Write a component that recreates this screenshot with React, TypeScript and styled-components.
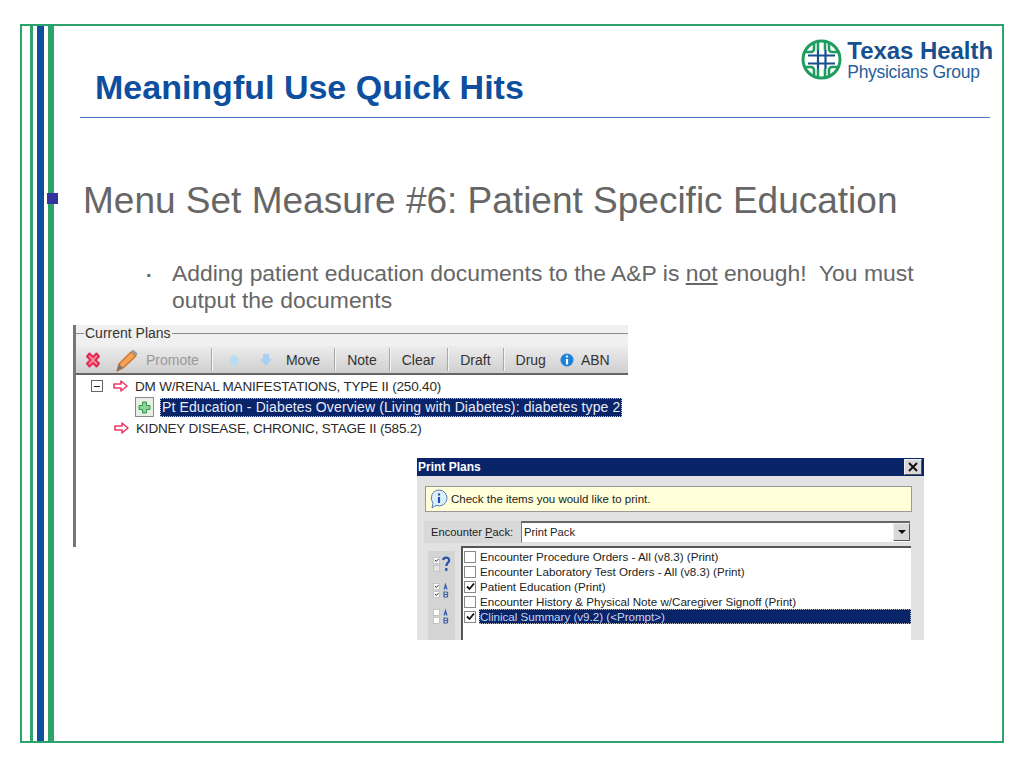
import React from 'react';
import styled, { createGlobalStyle } from 'styled-components';

const GREEN = '#2ba36b';
const BLUE = '#0d4f9e';
const NAVY = '#0a246a';
const GRAY_TEXT = '#666666';

const GlobalStyle = createGlobalStyle`
    html, body {
        margin: 0;
        padding: 0;
        background: white;
        font-family: "Liberation Sans", Arial, sans-serif;
    }
`;

const Page = styled.div`
    width: 1024px;
    height: 768px;
    padding: 24px 20px 25px;
    box-sizing: border-box;
    overflow: hidden;
`;

const Frame = styled.div`
    height: 100%;
    box-sizing: border-box;
    border: 2px solid ${GREEN};
    display: flex;
`;

const Stripes = styled.div`
    flex: none;
    width: 32px;
    padding-left: 8px;
    box-sizing: border-box;
    display: flex;
    gap: 4px;
`;

const Stripe = styled.div<{ $width: number; $color: string }>`
    width: ${p => p.$width}px;
    background: ${p => p.$color};
`;

const Main = styled.div`
    flex: 1;
    min-width: 0;
    position: relative;
`;

const Header = styled.div`
    height: 91px;
    margin: 0 12px 0 26px;
    padding-left: 15px;
    border-bottom: 1px solid #4a78c4;
    display: flex;
    justify-content: space-between;
`;

const Title = styled.h1`
    margin: 39px 0 0;
    font-size: 34px;
    line-height: 44px;
    font-weight: bold;
    color: ${BLUE};
    white-space: nowrap;
`;

const Logo = styled.div`
    margin: 13px -3px 0 0;
    display: flex;
    gap: 5px;
`;

const LogoText = styled.div`
    display: flex;
    flex-direction: column;
`;

const LogoName = styled.span`
    font-size: 24px;
    line-height: 24px;
    font-weight: bold;
    color: #17508f;
    letter-spacing: -0.05px;
`;

const LogoGroup = styled.span`
    font-size: 17.5px;
    line-height: 18px;
    color: #2a5f9a;
    letter-spacing: -0.3px;
`;

const Bullet = styled.div`
    position: absolute;
    left: -7px;
    top: 167px;
    width: 11px;
    height: 11px;
    background: #3333a0;
`;

const Heading = styled.h2`
    margin: 61px 0 0 29px;
    font-size: 37px;
    line-height: 44px;
    font-weight: normal;
    color: ${GRAY_TEXT};
    white-space: nowrap;
`;

const SubItem = styled.div`
    margin: 37px 0 0 118px;
    width: 770px;
    font-size: 22.9px;
    line-height: 27px;
    color: ${GRAY_TEXT};
    position: relative;
`;

const SubDot = styled.span`
    position: absolute;
    left: -26px;
    top: 2px;
    font-size: 20px;
    font-weight: bold;
`;

const Screens = styled.div`
    margin: 11px 0 0 19px;
    position: relative;
    width: 860px;
    height: 316px;
`;

const Panel = styled.div`
    width: 555px;
    height: 222px;
    box-sizing: border-box;
    border-left: 3px solid #777;
    color: #2a2a2a;
    font-size: 13.5px;
`;

const GroupLabelRow = styled.div`
    height: 21px;
    background: #f0f0f0;
    display: flex;
    align-items: flex-start;
    gap: 1px;
    line-height: 16px;
    font-size: 14px;
    color: #333;
`;

const GroupRule = styled.div<{ $width?: number }>`
    flex: ${p => (p.$width ? 'none' : 1)};
    width: ${p => p.$width ?? 0}px;
    height: 1px;
    margin-top: 8px;
    background: #8c8c8c;
`;

const Toolbar = styled.div`
    height: 29px;
    box-sizing: border-box;
    border-bottom: 2px solid #666;
    background: linear-gradient(#ececec, #cfcfcf);
    padding-left: 7px;
    display: flex;
    align-items: center;
    gap: 12px;
`;

const ToolText = styled.span<{ $disabled?: boolean; $after?: number }>`
    color: ${p => (p.$disabled ? '#999' : '#333')};
    font-size: 14px;
    white-space: nowrap;
    margin-right: ${p => p.$after ?? 0}px;
`;

const ToolSep = styled.span`
    width: 1px;
    height: 23px;
    background: #a8a8a8;
    box-shadow: 1px 0 0 #f4f4f4;
`;

const ToolIcon = styled.svg<{ $before?: number; $after?: number }>`
    flex: none;
    margin-left: ${p => p.$before ?? 0}px;
    margin-right: ${p => p.$after ?? 0}px;
`;

const Tree = styled.div`
    background: white;
    padding-top: 1px;
`;

const TreeRow = styled.div<{ $indent: number; $height: number }>`
    height: ${p => p.$height}px;
    padding-left: ${p => p.$indent}px;
    display: flex;
    align-items: center;
    white-space: nowrap;
`;

const Expander = styled.span`
    width: 10px;
    height: 10px;
    border: 1px solid #666;
    margin-right: 10px;
    display: flex;
    align-items: center;
    justify-content: center;
    &::after {
        content: '';
        width: 6px;
        height: 1px;
        background: #222;
    }
`;

const RowLabel = styled.span`
    margin-left: 7px;
    letter-spacing: -0.18px;
`;

const PlusBox = styled.span`
    width: 17px;
    height: 18px;
    border: 1px solid #8a8a8a;
    background: #e8efe4;
    display: flex;
    align-items: center;
    justify-content: center;
    margin-right: 6px;
`;

const SelectedLabel = styled.span`
    width: 462px;
    height: 19px;
    box-sizing: border-box;
    border: 1px dotted #c8c8c8;
    background: ${NAVY};
    color: #e8ecf8;
    font-size: 14px;
    line-height: 17px;
    padding-left: 1px;
    letter-spacing: 0.12px;
`;

const Dialog = styled.div`
    position: absolute;
    left: 344px;
    top: 133px;
    width: 507px;
    height: 182px;
    background: #e2e2e2;
    overflow: hidden;
    font-size: 11.6px;
    color: #222;
`;

const DialogTitle = styled.div`
    height: 18px;
    background: ${NAVY};
    color: white;
    font-weight: bold;
    font-size: 12px;
    padding: 0 2px 0 1px;
    display: flex;
    align-items: center;
    justify-content: space-between;
`;

const CloseButton = styled.span`
    width: 16px;
    height: 14px;
    background: #d8d8d8;
    border: 1px solid #f0f0f0;
    border-right-color: #555;
    border-bottom-color: #555;
    display: flex;
    align-items: center;
    justify-content: center;
`;

const Notice = styled.div`
    margin: 10px 12px 0 8px;
    height: 26px;
    box-sizing: border-box;
    border: 1px solid #999;
    background: #ffffd9;
    display: flex;
    align-items: center;
    gap: 2px;
    padding-left: 3px;
    font-size: 11.5px;
`;

const PackRow = styled.div`
    margin: 9px 14px 0 7px;
    height: 22px;
    background: #d9d9d9;
    font-size: 11.2px;
    display: flex;
    align-items: stretch;
`;

const PackLabel = styled.label`
    width: 97px;
    padding-left: 7px;
    box-sizing: border-box;
    display: flex;
    align-items: center;
    white-space: pre;
`;

const Underlined = styled.span`
    text-decoration: underline;
`;

const PackSelect = styled.div`
    flex: 1;
    background: white;
    border-top: 2px solid #666;
    border-left: 1px solid #777;
    border-bottom: 1px solid #ddd;
    display: flex;
    align-items: center;
    justify-content: space-between;
    padding: 0 0 1px 2px;
`;

const DropButton = styled.span`
    width: 15px;
    height: 16px;
    background: #d8d8d8;
    border: 1px solid #f0f0f0;
    border-right-color: #555;
    border-bottom-color: #555;
    display: flex;
    align-items: center;
    justify-content: center;
    &::after {
        content: '';
        border: 4px solid transparent;
        border-top-color: #111;
        border-bottom: 0;
    }
`;

const ListArea = styled.div`
    margin: 3px 13px 0 11px;
    height: 100px;
    display: flex;
    gap: 6px;
`;

const FilterStrip = styled.div`
    width: 27px;
    background: #d4d4d4;
    padding-top: 5px;
    box-sizing: border-box;
    display: flex;
    flex-direction: column;
    gap: 8px;
    align-items: center;
    margin-top: 5px;
`;

const PlanList = styled.div`
    flex: 1;
    background: white;
    border-left: 2px solid #555;
    border-top: 2px solid #555;
    padding-top: 1px;
`;

const PlanRow = styled.div`
    height: 15px;
    display: flex;
    align-items: center;
    padding-left: 1px;
    gap: 3px;
    white-space: nowrap;
`;

const CheckBox = styled.span`
    flex: none;
    width: 10px;
    height: 10px;
    border: 1px solid #888;
    background: white;
    display: flex;
    align-items: center;
    justify-content: center;
`;

const PlanLabel = styled.span<{ $selected?: boolean }>`
    flex: ${p => (p.$selected ? 1 : 'none')};
    height: 15px;
    line-height: 15px;
    padding-left: 1px;
    background: ${p => (p.$selected ? NAVY : 'transparent')};
    color: ${p => (p.$selected ? '#c8d4ee' : '#222')};
    outline: ${p => (p.$selected ? '1px dotted #bbb' : 'none')};
    outline-offset: -1px;
`;

const Arrow = () => (
    <svg width="15" height="12" viewBox="0 0 15 12">
        <path d="M1 4h7V1l6 5-6 5V8H1z" fill="white" stroke="#ee3a68" strokeWidth="1.600" strokeLinejoin="round" />
    </svg>
);

const LogoMark = () => (
    <svg width="41" height="41" viewBox="0 0 41 41" fill="none">
        <circle cx="20.500" cy="20.500" r="18.500" stroke="#1f9c60" strokeWidth="3" />
        <g stroke="#1f9c60" strokeWidth="2.600">
            <path d="M13 3v7a3 3 0 0 1-3 3H3" />
            <path d="M28 3v7a3 3 0 0 0 3 3h7" />
            <path d="M13 38v-7a3 3 0 0 0-3-3H3" />
            <path d="M28 38v-7a3 3 0 0 1 3-3h7" />
            <path d="M17 3v8M24 3v8M17 30v8M24 30v8" />
        </g>
        <g stroke="#17508f" strokeWidth="2.200">
            <path d="M7 16.500h27M7 24.500h27" />
            <path d="M17 11v19M24.500 11v19" />
        </g>
    </svg>
);

const PlanRows: { label: string; checked?: boolean; selected?: boolean }[] = [
    { label: 'Encounter Procedure Orders - All (v8.3) (Print)' },
    { label: 'Encounter Laboratory Test Orders - All (v8.3) (Print)' },
    { label: 'Patient Education (Print)', checked: true },
    { label: 'Encounter History & Physical Note w/Caregiver Signoff (Print)' },
    { label: 'Clinical Summary (v9.2) (<Prompt>)', checked: true, selected: true },
];

const FilterIcon = ({ glyph }: { glyph: 'q' | 'on' | 'off' }) => (
    <svg width="20" height="18" viewBox="0 0 20 18">
        <rect x="1.500" y="1.500" width="6" height="6" fill="white" stroke="#c4c4c4" />
        <rect x="1.500" y="9.500" width="6" height="6" fill={glyph === 'q' ? '#e4e4e4' : 'white'} stroke="#c4c4c4" />
        {glyph !== 'off' && <path d="M3 4l1.200 1.500L6.500 3" stroke="#333" fill="none" />}
        {glyph === 'on' && <path d="M3 12l1.200 1.500L6.500 11" stroke="#333" fill="none" />}
        {glyph === 'q'
            ? <path d="M11 4c1-3.500 7-3 6 1-.5 2-2.500 2-2.700 5M14.300 12v3" stroke="#2a50a8" strokeWidth="2.200" fill="none" />
            : <path d="M12 7.500l1.500-5 1.500 5M12.500 6h2M12 10h2.500a1.200 1.200 0 0 1 0 2.500H12zM12 12.500h2.500a1.200 1.200 0 0 1 0 2.500H12z" stroke="#3a60b0" strokeWidth="1.200" fill="none" />}
    </svg>
);

const App: React.FunctionComponent = () => (
    <Page>
        <GlobalStyle />
        <Frame>
            <Stripes>
                <Stripe $width={3} $color={GREEN} />
                <Stripe $width={7} $color={BLUE} />
                <Stripe $width={6} $color={GREEN} />
            </Stripes>
            <Main>
                <Bullet />
                <Header>
                    <Title>Meaningful Use Quick Hits</Title>
                    <Logo>
                        <LogoMark />
                        <LogoText>
                            <LogoName>Texas Health</LogoName>
                            <LogoGroup>Physicians Group</LogoGroup>
                        </LogoText>
                    </Logo>
                </Header>
                <Heading>Menu Set Measure #6: Patient Specific Education</Heading>
                <SubItem>
                    <SubDot>·</SubDot>
                    Adding patient education documents to the A&amp;P is <u>not</u> enough!&nbsp; You must output the documents
                </SubItem>
                <Screens>
                    <Panel>
                        <GroupLabelRow>
                            <GroupRule $width={8} />
                            Current Plans
                            <GroupRule />
                        </GroupLabelRow>
                        <Toolbar>
                            <ToolIcon width="20" height="20" viewBox="0 0 20 20">
                                <path d="M4 6.500l2.500-3L10 7l3.500-3.500 2.500 3-3.500 3.500 3.500 3.500-2.500 3L10 13l-3.500 3.500-2.500-3L7.500 10z" fill="#f78a9c" stroke="#e02c54" strokeWidth="2" strokeLinejoin="round" />
                            </ToolIcon>
                            <ToolIcon width="24" height="24" viewBox="0 0 24 24" $after={-5}>
                                <path d="M2 23l2-7L16 4l5 4L8 20z" fill="#f2a458" stroke="#cf6c22" strokeWidth="1.200" strokeLinejoin="round" />
                                <path d="M16 4l2-2.500 4.500 4L21 8z" fill="#9a9a9a" />
                                <path d="M2 23l2-7 4 4z" fill="#777" />
                            </ToolIcon>
                            <ToolText $disabled>Promote</ToolText>
                            <ToolSep />
                            <ToolIcon width="16" height="16" viewBox="0 0 16 16" $before={2} $after={4}>
                                <path d="M8 2l6 7h-3v5H5V9H2z" fill="#b8dcf4" />
                            </ToolIcon>
                            <ToolIcon width="16" height="16" viewBox="0 0 16 16">
                                <path d="M8 14l6-7h-3V2H5v5H2z" fill="#a8d0f4" />
                            </ToolIcon>
                            <ToolText $after={2}>Move</ToolText>
                            <ToolSep />
                            <ToolText>Note</ToolText>
                            <ToolSep />
                            <ToolText>Clear</ToolText>
                            <ToolSep />
                            <ToolText>Draft</ToolText>
                            <ToolSep />
                            <ToolText>Drug</ToolText>
                            <ToolIcon width="14" height="14" viewBox="0 0 14 14" $before={2} $after={-5}>
                                <circle cx="7" cy="7" r="6.500" fill="#1b82d8" />
                                <path d="M7 2.500v2M7 6v5.500" stroke="white" strokeWidth="2.200" />
                            </ToolIcon>
                            <ToolText>ABN</ToolText>
                        </Toolbar>
                        <Tree>
                            <TreeRow $indent={15} $height={20}>
                                <Expander />
                                <Arrow />
                                <RowLabel>DM W/RENAL MANIFESTATIONS, TYPE II (250.40)</RowLabel>
                            </TreeRow>
                            <TreeRow $indent={59} $height={22}>
                                <PlusBox>
                                    <svg width="13" height="13" viewBox="0 0 13 13">
                                        <path d="M4.500 1h4v3.500H12v4H8.500V12h-4V8.500H1v-4h3.500z" fill="#8ad49a" stroke="#2f9a4a" />
                                    </svg>
                                </PlusBox>
                                <SelectedLabel>Pt Education - Diabetes Overview (Living with Diabetes): diabetes type 2</SelectedLabel>
                            </TreeRow>
                            <TreeRow $indent={38} $height={20}>
                                <Arrow />
                                <RowLabel>KIDNEY DISEASE, CHRONIC, STAGE II (585.2)</RowLabel>
                            </TreeRow>
                        </Tree>
                    </Panel>
                    <Dialog>
                        <DialogTitle>
                            Print Plans
                            <CloseButton>
                                <svg width="10" height="10" viewBox="0 0 10 10">
                                    <path d="M1 1l8 8M9 1l-8 8" stroke="#111" strokeWidth="2" />
                                </svg>
                            </CloseButton>
                        </DialogTitle>
                        <Notice>
                            <svg width="20" height="20" viewBox="0 0 20 20">
                                <path d="M10 1a8 8 0 1 1-3 15.400L3 19l1-5A8 8 0 0 1 10 1z" fill="#dceefa" stroke="#5a80b8" />
                                <path d="M10 4.500v2M10 8v6" stroke="#2050b0" strokeWidth="2.200" />
                            </svg>
                            Check the items you would like to print.
                        </Notice>
                        <PackRow>
                            <PackLabel>Encounter <Underlined>P</Underlined>ack:</PackLabel>
                            <PackSelect>
                                Print Pack
                                <DropButton />
                            </PackSelect>
                        </PackRow>
                        <ListArea>
                            <FilterStrip>
                                <FilterIcon glyph="q" />
                                <FilterIcon glyph="on" />
                                <FilterIcon glyph="off" />
                            </FilterStrip>
                            <PlanList>
                                {PlanRows.map(row => (
                                    <PlanRow key={row.label}>
                                        <CheckBox>
                                            {row.checked && (
                                                <svg width="9" height="9" viewBox="0 0 9 9">
                                                    <path d="M1 4.500l2.500 2.500L8 1.500" stroke="#111" strokeWidth="1.800" fill="none" />
                                                </svg>
                                            )}
                                        </CheckBox>
                                        <PlanLabel $selected={row.selected}>{row.label}</PlanLabel>
                                    </PlanRow>
                                ))}
                            </PlanList>
                        </ListArea>
                    </Dialog>
                </Screens>
            </Main>
        </Frame>
    </Page>
);

export default App;
